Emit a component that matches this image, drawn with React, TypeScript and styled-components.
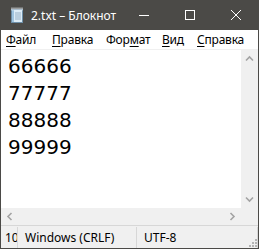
import React from "react";
import styled, { createGlobalStyle } from "styled-components";

const GlobalStyle = createGlobalStyle`
  html, body {
    margin: 0;
    padding: 0;
    background: #ffffff;
  }
  * {
    box-sizing: border-box;
  }
`;

const uiFont = `"Segoe UI", "Noto Sans", "Open Sans", sans-serif`;

const Window = styled.div`
  width: 259px;
  height: 249px;
  border: 1px solid #4b4a47;
  border-top: none;
  display: flex;
  flex-direction: column;
  background: #ffffff;
  font-family: ${uiFont};
  overflow: hidden;
`;

const TitleBar = styled.div`
  height: 30px;
  flex: none;
  background: #4b4a47;
  display: flex;
  align-items: center;
  margin: 0 -1px;
`;

const AppIcon = styled.div`
  width: 16px;
  height: 16px;
  margin-left: 9px;
  margin-right: 6px;
  display: flex;
`;

const Title = styled.div`
  flex: 1;
  color: #ffffff;
  font-size: 12px;
  white-space: nowrap;
`;

const CaptionButton = styled.div`
  width: 46px;
  height: 30px;
  display: flex;
  align-items: center;
  justify-content: center;
`;

const MenuBar = styled.div`
  height: 19px;
  flex: none;
  display: flex;
  align-items: center;
  background: #ffffff;
`;

const MenuItem = styled.div<{ $width?: number }>`
  width: ${(p) => (p.$width ? `${p.$width}px` : "auto")};
  flex: none;
  padding-left: 5px;
  font-size: 12px;
  letter-spacing: -0.2px;
  line-height: 19px;
  color: #000000;
  white-space: nowrap;

  u {
    text-decoration: underline;
    text-underline-offset: 2px;
  }
`;

const EditorFrame = styled.div`
  flex: 1;
  display: grid;
  grid-template-columns: 1fr 17px;
  grid-template-rows: 1fr 17px;
  border-top: 1px solid #f0f0f0;
  min-height: 0;
`;

const TextArea = styled.div`
  padding: 3px 0 0 7px;
  font-family: "DejaVu Sans", Verdana, sans-serif;
  font-size: 20px;
  line-height: 27px;
  color: #000000;
  overflow: hidden;
`;

const ScrollBar = styled.div<{ $vertical?: boolean }>`
  background: #f0f0f0;
  display: flex;
  flex-direction: ${(p) => (p.$vertical ? "column" : "row")};
  justify-content: space-between;
  align-items: center;
`;

const ArrowBox = styled.div`
  width: 17px;
  height: 17px;
  display: flex;
  align-items: center;
  justify-content: center;
`;

const Corner = styled.div`
  background: #f0f0f0;
`;

const StatusBar = styled.div`
  height: 23px;
  flex: none;
  display: flex;
  align-items: stretch;
  background: #f0f0f0;
  border-top: 1px solid #d7d7d7;
  position: relative;
`;

const StatusCell = styled.div<{ $width?: number }>`
  width: ${(p) => (p.$width ? `${p.$width}px` : "auto")};
  flex: ${(p) => (p.$width ? "none" : "1")};
  display: flex;
  align-items: center;
  padding-left: 7px;
  font-size: 12px;
  color: #000000;
  white-space: nowrap;
  overflow: hidden;
  border-right: 1px solid #d7d7d7;
  margin-top: 1px;

  &:last-of-type {
    border-right: none;
  }
`;

const FirstCell = styled(StatusCell)`
  padding-left: 4px;
`;

const Grip = styled.div`
  position: absolute;
  right: 1px;
  bottom: 1px;
  width: 8px;
  height: 8px;
  display: flex;
`;

const Chevron = ({ dir }: { dir: "up" | "down" | "left" | "right" }) => {
  const rot = { up: 0, right: 90, down: 180, left: 270 }[dir];
  return (
    <svg width="9" height="9" viewBox="0 0 9 9" style={{ transform: `rotate(${rot}deg)` }}>
      <path d="M1 6.5 L4.5 3 L8 6.5" fill="none" stroke="#a3a3a3" strokeWidth="1.6" />
    </svg>
  );
};

const NotepadIcon = () => (
  <svg width="16" height="16" viewBox="0 0 16 16">
    <rect x="2.5" y="2.5" width="11" height="13" fill="#dcecf7" stroke="#6e8fa8" />
    <rect x="3" y="3" width="2" height="12" fill="#9fc3de" />
    <path d="M6 6h6M6 8h6M6 10h6M6 12h6" stroke="#9ab1c4" strokeWidth="1" />
    {[3, 5, 7, 9, 11, 13].map((x) => (
      <rect key={x} x={x - 0.5} y="0.5" width="1" height="3" fill="#e8eef3" />
    ))}
  </svg>
);

// menu items: accelerator letter is underlined, widths taken from the reference
const menu: { pre: string; key: string; post: string; width?: number }[] = [
  { pre: "", key: "Ф", post: "айл", width: 46 },
  { pre: "", key: "П", post: "равка", width: 54 },
  { pre: "Фор", key: "м", post: "ат", width: 56 },
  { pre: "", key: "В", post: "ид", width: 35 },
  { pre: "", key: "С", post: "правка" },
];

export default function App() {
  return (
    <>
      <GlobalStyle />
      <Window>
        <TitleBar>
          <AppIcon>
            <NotepadIcon />
          </AppIcon>
          <Title>2.txt – Блокнот</Title>
          <CaptionButton>
            <svg width="10" height="10" viewBox="0 0 10 10">
              <path d="M0 5.5h10" stroke="#ffffff" strokeWidth="1" />
            </svg>
          </CaptionButton>
          <CaptionButton>
            <svg width="10" height="10" viewBox="0 0 10 10">
              <rect x="0.5" y="0.5" width="9" height="9" fill="none" stroke="#ffffff" strokeWidth="1" />
            </svg>
          </CaptionButton>
          <CaptionButton>
            <svg width="10" height="10" viewBox="0 0 10 10">
              <path d="M0 0L10 10M10 0L0 10" stroke="#ffffff" strokeWidth="1" />
            </svg>
          </CaptionButton>
        </TitleBar>

        <MenuBar>
          {menu.map((m) => (
            <MenuItem key={m.pre + m.key + m.post} $width={m.width}>
              {m.pre}
              <u>{m.key}</u>
              {m.post}
            </MenuItem>
          ))}
        </MenuBar>

        <EditorFrame>
          <TextArea>
            <div>66666</div>
            <div>77777</div>
            <div>88888</div>
            <div>99999</div>
          </TextArea>
          <ScrollBar $vertical>
            <ArrowBox>
              <Chevron dir="up" />
            </ArrowBox>
            <ArrowBox>
              <Chevron dir="down" />
            </ArrowBox>
          </ScrollBar>
          <ScrollBar>
            <ArrowBox>
              <Chevron dir="left" />
            </ArrowBox>
            <ArrowBox>
              <Chevron dir="right" />
            </ArrowBox>
          </ScrollBar>
          <Corner />
        </EditorFrame>

        <StatusBar>
          <FirstCell $width={17}>10</FirstCell>
          <StatusCell $width={119}>Windows (CRLF)</StatusCell>
          <StatusCell>UTF-8</StatusCell>
          <Grip>
            <svg width="8" height="8" viewBox="0 0 8 8">
              <rect x="6" y="0" width="2" height="2" fill="#b4b4b4" />
              <rect x="3" y="3" width="2" height="2" fill="#b4b4b4" />
              <rect x="6" y="3" width="2" height="2" fill="#b4b4b4" />
              <rect x="0" y="6" width="2" height="2" fill="#b4b4b4" />
              <rect x="3" y="6" width="2" height="2" fill="#b4b4b4" />
              <rect x="6" y="6" width="2" height="2" fill="#b4b4b4" />
            </svg>
          </Grip>
        </StatusBar>
      </Window>
    </>
  );
}
